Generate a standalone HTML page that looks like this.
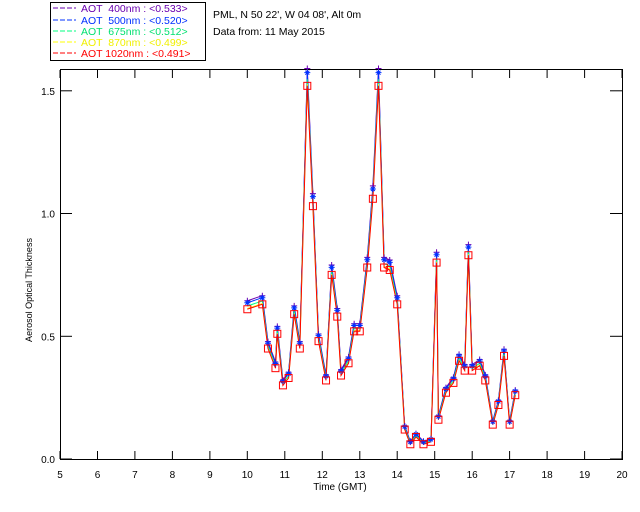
<!DOCTYPE html>
<html><head><style>
body{margin:0;background:#fff;width:640px;height:512px;overflow:hidden}
svg{display:block;font-family:"Liberation Sans",sans-serif}
</style></head><body>
<svg width="640" height="512" xmlns="http://www.w3.org/2000/svg" id="s">
<rect x="50.5" y="2.5" width="155" height="58" fill="none" stroke="#000"/>
<g font-size="10.5">
<line x1="53" y1="8" x2="76" y2="8" stroke="#6a00b0" stroke-dasharray="5,2"/><text x="81" y="12" fill="#6a00b0" xml:space="preserve">AOT  400nm : &lt;0.533&gt;</text>
<line x1="53" y1="20" x2="76" y2="20" stroke="#0030ff" stroke-dasharray="5,2"/><text x="81" y="24" fill="#0030ff" xml:space="preserve">AOT  500nm : &lt;0.520&gt;</text>
<line x1="53" y1="31" x2="76" y2="31" stroke="#00ff80" stroke-dasharray="5,2"/><text x="81" y="35" fill="#00e070" xml:space="preserve">AOT  675nm : &lt;0.512&gt;</text>
<line x1="53" y1="42" x2="76" y2="42" stroke="#ffff00" stroke-dasharray="5,2"/><text x="81" y="46" fill="#f0f000" xml:space="preserve">AOT  870nm : &lt;0.499&gt;</text>
<line x1="53" y1="53" x2="76" y2="53" stroke="#ff0000" stroke-dasharray="5,2"/><text x="81" y="57" fill="#ff0000" xml:space="preserve">AOT 1020nm : &lt;0.491&gt;</text>
<text x="213" y="18" fill="#000">PML, N 50 22', W 04 08', Alt 0m</text>
<text x="213" y="35" fill="#000">Data from: 11 May 2015</text>
</g>
<rect x="60.5" y="69.5" width="562" height="390" fill="none" stroke="#000"/>
<g id="ax" stroke="#000"></g>
<g id="lab" font-size="10" fill="#000"></g>
<text x="340" y="490" font-size="10" text-anchor="middle">Time (GMT)</text>
<text transform="translate(32,290) rotate(-90)" font-size="9" text-anchor="middle">Aerosol Optical Thickness</text>
<g id="plot"></g>
</svg>
<script>
const X=t=>60+(t-5)*37.47, Y=v=>459-v*245.5;
let ax='',lab='';
for(let h=5;h<=20;h++){const x=X(h).toFixed(1);ax+=`<line x1="${x}" y1="459" x2="${x}" y2="451"/><line x1="${x}" y1="70" x2="${x}" y2="78"/>`;lab+=`<text x="${x}" y="478" text-anchor="middle">${h}</text>`;}
for(const v of [0,0.5,1,1.5]){const y=Y(v).toFixed(1);ax+=`<line x1="60" y1="${y}" x2="72" y2="${y}"/><line x1="622" y1="${y}" x2="610" y2="${y}"/>`;lab+=`<text x="55" y="${+y+4}" text-anchor="end">${v.toFixed(1)}</text>`;}
document.getElementById('ax').innerHTML=ax;document.getElementById('lab').innerHTML=lab;
const d=[[10,.61],[10.4,.63],[10.55,.45],[10.75,.37],[10.8,.51],[10.95,.3],[11.1,.33],[11.25,.59],[11.4,.45],[11.6,1.52],[11.75,1.03],[11.9,.48],[12.1,.32],[12.25,.75],[12.4,.58],[12.5,.34],[12.7,.39],[12.85,.52],[13,.52],[13.2,.78],[13.35,1.06],[13.5,1.52],[13.65,.78],[13.8,.77],[14,.63],[14.2,.12],[14.35,.06],[14.5,.09],[14.7,.06],[14.9,.07],[15.05,.8],[15.1,.16],[15.3,.27],[15.5,.31],[15.65,.4],[15.8,.36],[15.9,.83],[16,.36],[16.2,.38],[16.35,.32],[16.55,.14],[16.7,.22],[16.85,.42],[17,.14],[17.15,.26]];
const ser=[['#6a00b0',1.04,.01],['#0030ff',1.03,.008],['#00ff80',1.015,.004],['#ffff00',1.005,0],['#ff0000',1,0]];
let p='';
for(const [c,f,o] of ser){const pts=d.map(([t,v])=>X(t).toFixed(1)+','+Y(v*f+o).toFixed(1)).join(' ');p+=`<polyline points="${pts}" fill="none" stroke="${c}" stroke-width="1"/>`;}
for(const [t,v] of d){const x=X(t),y1=Y(v*1.04+.01),y2=Y(v*1.03+.008),y=Y(v);
p+=`<path d="M${x-3} ${y1}h6M${x} ${y1-3}v6" stroke="#6a00b0"/><path d="M${x-3} ${y2}h6M${x} ${y2-3}v6M${x-2} ${y2-2}l4 4M${x+2} ${y2-2}l-4 4" stroke="#0030ff"/>`;
p+=`<rect x="${x-3.5}" y="${y-3.5}" width="7" height="7" fill="none" stroke="#ff0000"/>`;}
document.getElementById('plot').innerHTML=p;
</script>
</body></html>
